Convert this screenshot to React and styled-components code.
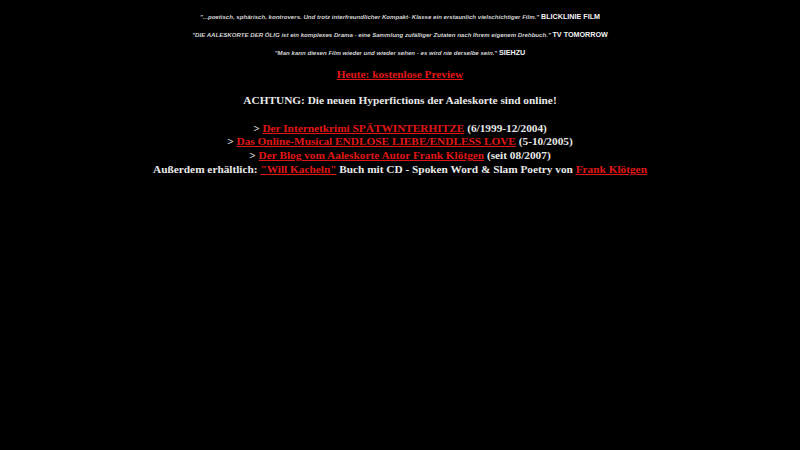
import React from "react";
import styled, { createGlobalStyle } from "styled-components";

const Global = createGlobalStyle`
  html, body { margin: 0; padding: 0; background: #000; }
  body { width: 800px; height: 450px; overflow: hidden; }
`;

const Page = styled.div`
  background: #000;
  width: 800px;
  height: 450px;
  display: flex;
  flex-direction: column;
  align-items: center;
  padding-top: 12px;
  box-sizing: border-box;
`;

const Quotes = styled.div`
  display: flex;
  flex-direction: column;
  align-items: center;
  gap: 8px;
  font-family: "Liberation Sans", Arial, sans-serif;
  font-size: 6.1px;
  line-height: 10px;
`;

const Quote = styled.div`
  font-style: italic;
  font-weight: bold;
  color: #d4d4d4;
  white-space: nowrap;
`;

const Source = styled.span`
  font-style: normal;
  font-weight: bold;
  color: #f2f2f2;
  font-size: 7.2px;
`;

const Main = styled.div`
  font-family: "Liberation Serif", "Times New Roman", serif;
  font-weight: bold;
  font-size: 11.3px;
  color: #e8e8e8;
  text-align: center;
  line-height: 13.8px;
  margin-top: ${(p) => p.$mt}px;
  white-space: nowrap;
`;

const Link = styled.a`
  color: #e01616;
  text-decoration: underline;
`;

export default function App() {
  return (
    <>
      <Global />
      <Page>
        <Quotes>
          <Quote>
            "...poetisch, sphärisch, kontrovers. Und trotz interfreundlicher Kompakt- Klasse ein erstaunlich vielschichtiger Film." <Source>BLICKLINIE FILM</Source>
          </Quote>
          <Quote>
            "DIE AALESKORTE DER ÖLIG ist ein komplexes Drama - eine Sammlung zufälliger Zutaten nach Ihrem eigenem Drehbuch." <Source>TV TOMORROW</Source>
          </Quote>
          <Quote>
            "Man kann diesen Film wieder und wieder sehen - es wird nie derselbe sein." <Source>SIEHZU</Source>
          </Quote>
        </Quotes>
        <Main $mt={10}>
          <Link href="#">Heute: kostenlose Preview</Link>
        </Main>
        <Main $mt={12}>ACHTUNG: Die neuen Hyperfictions der Aaleskorte sind online!</Main>
        <Main $mt={14}>
          &gt; <Link href="#">Der Internetkrimi SPÄTWINTERHITZE</Link> (6/1999-12/2004)
          <br />
          &gt; <Link href="#">Das Online-Musical ENDLOSE LIEBE/ENDLESS LOVE</Link> (5-10/2005)
          <br />
          &gt; <Link href="#">Der Blog vom Aaleskorte Autor Frank Klötgen</Link> (seit 08/2007)
          <br />
          Außerdem erhältlich: <Link href="#">"Will Kacheln"</Link> Buch mit CD - Spoken Word &amp; Slam Poetry von <Link href="#">Frank Klötgen</Link>
        </Main>
      </Page>
    </>
  );
}
